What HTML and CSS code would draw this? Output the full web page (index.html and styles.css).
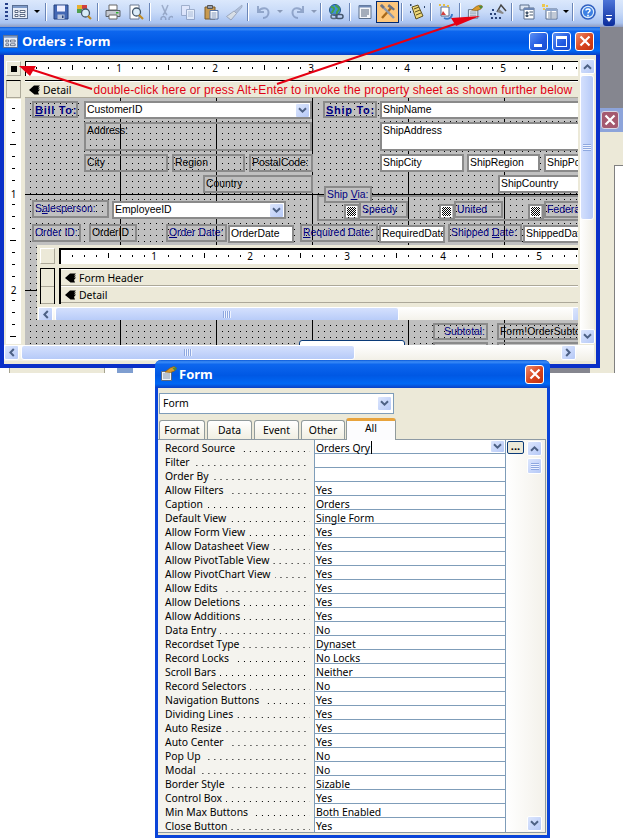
FILE: index.html
```html
<!DOCTYPE html>
<html lang="en">
<head>
<meta charset="utf-8">
<title>Orders : Form</title>
<link rel="stylesheet" href="styles.css">
</head>
<body>
<svg class="defs" width="0" height="0" aria-hidden="true">
  <symbol id="cd" viewBox="0 0 9 7"><path d="M1 1.2 4.5 4.6 8 1.2" fill="none" stroke="#4d6185" stroke-width="2"/></symbol>
  <symbol id="cu" viewBox="0 0 9 7"><path d="M1 5.8 4.5 2.4 8 5.8" fill="none" stroke="#4d6185" stroke-width="2"/></symbol>
  <symbol id="cl" viewBox="0 0 7 9"><path d="M5.8 1 2.4 4.5 5.8 8" fill="none" stroke="#4d6185" stroke-width="2"/></symbol>
  <symbol id="cr" viewBox="0 0 7 9"><path d="M1.2 1 4.6 4.5 1.2 8" fill="none" stroke="#4d6185" stroke-width="2"/></symbol>
  <symbol id="formi" viewBox="0 0 16 14"><rect x=".5" y=".5" width="15" height="13" fill="#e8eef8" stroke="#5a6f92"/><rect x="1" y="1" width="14" height="2" fill="#7d9ac8"/><path d="M3 5.5h3v2H3zM8 5.5h5v2H8zM3 9.5h3v2H3zM8 9.5h5v2H8z" fill="#fff" stroke="#3a4a68" stroke-width=".8"/></symbol>
  <symbol id="props" viewBox="0 0 17 16"><path d="M1.5 5.5h10v9h-10z" fill="#eef2f6" stroke="#59697f"/><path d="M3 8h7M3 10h7M3 12h7" stroke="#8295ad"/><path d="M5 6 10 2l4-1.500 2.500 1.500-2 3-4 1.500z" fill="#d99a2b" stroke="#8a5a10" stroke-width=".7"/><path d="M12.500 2 16 1l.5 2.500-2 1z" fill="#4c8a3a"/></symbol>
  <symbol id="sect" viewBox="0 0 11 10"><path d="M0 5 5 .5h6L9 2.500h2L9 4.500h2L9 7l1 2.500H5.500z" fill="#000"/></symbol>
</svg>

<header class="toolbar">
  <i class="tgrip"></i>
  <span class="b"><svg class="i16" viewBox="0 0 16 14"><use href="#formi"/></svg></span><span class="a"></span><i class="s"></i>
  <span class="b"><svg class="i16" viewBox="0 0 16 16"><path d="M1 1h14v14H1z" fill="#4468b4" stroke="#24407c"/><path d="M4 1.500h8v6H4z" fill="#eef"/><path d="M4.500 10.500h7v4.500h-7z" fill="#b8c4dc"/><path d="M9 11.500h1.500v2.500H9z" fill="#24407c"/></svg></span>
  <span class="b"><svg class="i16" viewBox="0 0 16 16"><path d="M1 1h5v4H1z" fill="#e8b030"/><path d="M6 1h5v4H6z" fill="#d04040"/><path d="M1 5h5v4H1z" fill="#50a050"/><path d="M6 5h5v4H6z" fill="#fff" stroke="#888" stroke-width=".5"/><circle cx="9.500" cy="9" r="4" fill="#d8ecf8" stroke="#44586c" stroke-width="1.300"/><path d="m12 12 3 3" stroke="#c08a20" stroke-width="2.200"/></svg></span><i class="s"></i>
  <span class="b"><svg class="i16" viewBox="0 0 16 16"><path d="M4 1h8v5H4z" fill="#fff" stroke="#666"/><path d="M1 6.500h14v6H1z" fill="#c4c8d0" stroke="#5a6068"/><path d="M11 8h2.500v1.500H11z" fill="#30b030"/><path d="M4 11h8v4H4z" fill="#fff" stroke="#666"/></svg></span>
  <span class="b"><svg class="i16" viewBox="0 0 16 16"><path d="M2 1h9v14H2z" fill="#fff" stroke="#6a7890"/><circle cx="8.500" cy="8" r="4" fill="#dcecf8" stroke="#44586c" stroke-width="1.300"/><path d="m11 11 4 4" stroke="#c08a20" stroke-width="2.200"/></svg></span><i class="s"></i>
  <span class="b"><svg class="i16" viewBox="0 0 16 16" opacity=".55"><path d="M5 1 8 8l3-7M4 15a2.400 2.400 0 1 0 0-.1M12 15a2.400 2.400 0 1 0 0-.1M6 11 8 8l2 3" fill="none" stroke="#7484a4" stroke-width="1.500"/></svg></span>
  <span class="b"><svg class="i16" viewBox="0 0 16 16" opacity=".55"><path d="M1.500 1.500h8v10h-8z" fill="#eef" stroke="#7888a8"/><path d="M6.500 5.500h8v10h-8z" fill="#fff" stroke="#7888a8"/><path d="M8 8h5M8 10h5M8 12h5" stroke="#9aa8c0"/></svg></span>
  <span class="b"><svg class="i16" viewBox="0 0 16 16"><path d="M2 3h10v12H2z" fill="#c89a50" stroke="#7a5a28"/><path d="M4.500 1.500h5v3h-5z" fill="#98a0b0" stroke="#555"/><path d="M7 6.500h8v8.500H7z" fill="#fff" stroke="#5470a0"/><path d="M8.500 9h5M8.500 11h5M8.500 13h5" stroke="#7890b8"/></svg></span>
  <span class="b"><svg class="i16 wide" viewBox="0 0 18 16" opacity=".65"><path d="M17 1 9 7.500l2 2.500 6-7z" fill="#a4b0c8" stroke="#7888a0" stroke-width=".7"/><path d="M9 7 1.500 12.500 6 16l5.500-6.500z" fill="#e4e4de" stroke="#8a90a0"/></svg></span><i class="s"></i>
  <span class="b"><svg class="i16" viewBox="0 0 16 16" opacity=".6"><path d="M3 2v6h6M3.500 7.500C6 3 14 3 13.500 9c-.2 3-2.500 5-5.500 5" fill="none" stroke="#6d83ad" stroke-width="2"/></svg></span><span class="a off"></span>
  <span class="b"><svg class="i16" viewBox="0 0 16 16" opacity=".6"><path d="M13 2v6H7M12.500 7.500C10 3 2 3 2.500 9c.2 3 2.500 5 5.500 5" fill="none" stroke="#6d83ad" stroke-width="2"/></svg></span><span class="a off tight"></span><i class="s"></i>
  <span class="b"><svg class="i16 wide" viewBox="0 0 18 16"><circle cx="8" cy="6" r="5.500" fill="#3f8fd8" stroke="#24588c"/><path d="M4 3c2 0 3 1 3 2S5 7 5 9M9 1c0 2 3 2 3 4s-3 2-2 5" fill="none" stroke="#48a048" stroke-width="2"/><rect x="4" y="10.500" width="6" height="4" rx="2" fill="none" stroke="#5a6c80" stroke-width="1.500"/><rect x="9" y="10.500" width="7" height="4" rx="2" fill="none" stroke="#44566c" stroke-width="1.500"/></svg></span><i class="s"></i>
  <span class="b"><svg class="i16" viewBox="0 0 16 16"><path d="M2 1.500h12v13H2z" fill="#f4f6fa" stroke="#5a6f8c"/><path d="M2 1.500h12v2H2z" fill="#6e88b4"/><path d="M4 6h8M4 8h8M4 10h8M4 12h6" stroke="#54647c"/></svg></span>
  <span class="b on"><svg class="i16 wide" viewBox="0 0 18 18"><path d="M3 15 13 4" stroke="#a86818" stroke-width="2.400"/><path d="m10 1 6 5-1.500 1.500-6-4z" fill="#6c7484"/><path d="M15 15 5 5" stroke="#8c98ac" stroke-width="2.400"/><path d="M1.500 2 3 1l3 3-2 2-3-3z" fill="#6c7484"/></svg></span><i class="s"></i>
  <span class="b"><svg class="i16" viewBox="0 0 16 16"><path d="M3 3 9 1l5 11-7 3z" fill="#f0d878" stroke="#5a5020"/><path d="M5 5l5-2M6 8l5-2M7 11l5-2" stroke="#5a5020"/><path d="M1 1h1.500M15 3h1M1 8h1" stroke="#304870" stroke-width="2"/></svg></span><i class="s"></i>
  <span class="b"><svg class="i16" viewBox="0 0 16 16"><path d="M3 3h8v9H3z" fill="#fff" stroke="#5a6f8c"/><path d="M1 0h2v2H1zM5 0h2v2H5zM9 1h2v2H9z" fill="#e8c040"/><path d="M5 7 3 11h5z" fill="#d04040"/><path d="M6 14c4 2 8 0 8-4" fill="none" stroke="#3878c8" stroke-width="1.800"/></svg></span><i class="s"></i>
  <span class="b"><svg class="i16" viewBox="0 0 17 16"><use href="#props"/></svg></span>
  <span class="b"><svg class="i16 wide" viewBox="0 0 18 16"><path d="M8 8 12 1l5 6" fill="none" stroke="#444" stroke-width="1.500"/><path d="M8 8l2-3 5 4-1.500 1z" fill="#888"/><path d="M3 5h2v2H3zM1 9h2v2H1zM5 9h2v2H5zM2 13h2v2H2zM6 13h2v2H6zM10 13h2v2h-2z" fill="#2c4478"/></svg></span><i class="s"></i>
  <span class="b"><svg class="i16" viewBox="0 0 16 16"><path d="M1 1h9v5H1z" fill="#dde6f4" stroke="#5a6f8c"/><path d="M5 4h10v11H5z" fill="#fff" stroke="#5a6f8c"/><path d="M5 4h10v2H5z" fill="#6e88b4"/><path d="M7 8h2v1.500H7zM7 11h2v1.500H7zM10.500 8H14M10.500 11H14" stroke="#44566c" fill="#44566c"/></svg></span>
  <span class="b"><svg class="i16" viewBox="0 0 16 16"><path d="M4 5h11v10H4z" fill="#fff" stroke="#5a6f8c"/><path d="M4 5h11v2H4z" fill="#8ea6cc"/><path d="M6 9h8M6 11h8M6 13h8M9 7v8" stroke="#8495ad"/><path d="M0 0h3v3H0zM4 1h2v2H4zM1 4h2v2H1z" fill="#ecc850"/></svg></span><span class="a tight"></span><i class="s"></i>
  <span class="b"><svg class="i16" viewBox="0 0 16 16"><circle cx="8" cy="8" r="7" fill="#dcecfc" stroke="#3060c0" stroke-width="1.600"/><circle cx="8" cy="8" r="5" fill="#3c80e4"/><path d="M6 6.500C6 4.500 10 4.500 10 6.500 10 8 8 8 8 9.500" fill="none" stroke="#fff" stroke-width="1.500"/><path d="M7.200 10.800h1.600v1.600H7.200z" fill="#fff"/></svg></span>
  <span class="tend"><i class="tend-a"></i><i class="tend-b"></i></span>
</header>

<div class="desk"></div>

<section class="backwin">
  <div class="backtitle"><span class="x x-dim"><svg viewBox="0 0 12 12"><path d="M1.500 1.500 10.500 10.500M10.500 1.500 1.500 10.500" stroke="#fff" stroke-width="2.200"/></svg></span></div>
  <div class="backbody"><div class="backbox"></div></div>
</section>

<div class="under"><i class="under-a"></i><i class="under-b"></i></div>

<section class="win orders">
  <div class="title">
    <svg class="ticon" viewBox="0 0 16 14"><use href="#formi"/></svg>
    <span class="ttext">Orders : Form</span>
    <span class="wbtns">
      <span class="x x-b"><i class="min"></i></span>
      <span class="x x-b"><i class="max"></i></span>
      <span class="x"><svg viewBox="0 0 12 12"><path d="M1.500 1.500 10.500 10.500M10.500 1.500 1.500 10.500" stroke="#fff" stroke-width="2.200"/></svg></span>
    </span>
  </div>
  <div class="obody">
    <div class="corner"><i class="square"></i></div>
    <div class="ruler rh"><b class="n n1">1</b><b class="n n2">2</b><b class="n n3">3</b><b class="n n4">4</b><b class="n n5">5</b></div>
    <div class="vscroll">
      <span class="sb"><svg class="ch" viewBox="0 0 9 7"><use href="#cu"/></svg></span>
      <div class="vtrack"><div class="vthumb"><i class="grip-v"></i></div></div>
      <span class="sb"><svg class="ch" viewBox="0 0 9 7"><use href="#cd"/></svg></span>
    </div>
    <div class="leftcol">
      <div class="secbox"></div>
      <div class="ruler rv"><b class="vn vn1">1</b><b class="vn vn2">2</b></div>
    </div>
    <div class="design">
      <div class="bar detailbar"><svg class="sect" viewBox="0 0 11 10"><use href="#sect"/></svg><span>Detail</span><span class="redtext">double-click here or press Alt+Enter to invoke the property sheet as shown further below</span></div>
      <div class="canvas">
        <div class="c lbl strong billto"><u>B</u>ill To:</div>
        <div class="c fld customer">CustomerID<span class="sb combo"><svg class="ch" viewBox="0 0 9 7"><use href="#cd"/></svg></span></div>
        <div class="c lbl strong shipto"><u>S</u>hip To:</div>
        <div class="c fld shipname">ShipName</div>
        <div class="c ctl address">Address:</div>
        <div class="c fld shipaddr">ShipAddress</div>
        <div class="c ctl city">City</div>
        <div class="c ctl region">Region</div>
        <div class="c ctl postal">PostalCode:</div>
        <div class="c fld shipcity">ShipCity</div>
        <div class="c fld shipregion">ShipRegion</div>
        <div class="c fld shippo">ShipPostalCode</div>
        <div class="c ctl country">Country</div>
        <div class="c fld shipcountry">ShipCountry</div>
        <div class="c frame"></div>
        <div class="c lbl shipvia">Ship <u>V</u>ia:</div>
        <div class="c cbx cb1"><i></i></div><div class="c lbl speedy">Speedy</div>
        <div class="c cbx cb2"><i></i></div><div class="c lbl united">United</div>
        <div class="c cbx cb3"><i></i></div><div class="c lbl federal">Federal</div>
        <div class="c lbl sales">S<u>a</u>lesperson:</div>
        <div class="c fld employee">EmployeeID<span class="sb combo"><svg class="ch" viewBox="0 0 9 7"><use href="#cd"/></svg></span></div>
        <div class="c lbl oidl">Order ID:</div>
        <div class="c ctl oid">OrderID</div>
        <div class="c lbl odl"><u>O</u>rder Date:</div>
        <div class="c fld od">OrderDate</div>
        <div class="c lbl rdl"><u>R</u>equired Date:</div>
        <div class="c fld rd">RequiredDate</div>
        <div class="c lbl sdl">Shipped <u>D</u>ate:</div>
        <div class="c fld sd">ShippedDate</div>

        <div class="c lbl subtotal">Subtotal:</div>
        <div class="c ctl subval">Form!OrderSubtotal</div>
        <div class="c peek"></div>
        <div class="c ctl sub2"></div>
        <div class="c ctl sub3"></div>

        <div class="c subform">
          <div class="corner sc"></div>
          <div class="ruler srh"><b class="n s1">1</b><b class="n s2">2</b><b class="n s3">3</b><b class="n s4">4</b><b class="n s5">5</b></div>
          <div class="sboxes"><i></i><i></i></div>
          <div class="sbars">
            <div class="bar sbar"><svg class="sect" viewBox="0 0 11 10"><use href="#sect"/></svg><span>Form Header</span></div>
            <div class="bar sbar"><svg class="sect" viewBox="0 0 11 10"><use href="#sect"/></svg><span>Detail</span></div>
          </div>
          <div class="hscroll inner">
            <span class="sb"><svg class="ch tall" viewBox="0 0 7 9"><use href="#cl"/></svg></span>
            <div class="hthumb hs"><i class="grip-h"></i></div>
            <span class="sb endbtn"></span>
          </div>
        </div>
      </div>
    </div>
    <div class="hscroll outer">
      <span class="sb"><svg class="ch tall" viewBox="0 0 7 9"><use href="#cl"/></svg></span>
      <div class="hthumb ho"><i class="grip-h"></i></div>
      <span class="sb endbtn"><svg class="ch tall" viewBox="0 0 7 9"><use href="#cr"/></svg></span>
    </div>
  </div>
</section>

<section class="win form">
  <div class="title">
    <svg class="ticon picon" viewBox="0 0 17 16"><use href="#props"/></svg>
    <span class="ttext">Form</span>
    <span class="wbtns"><span class="x"><svg viewBox="0 0 12 12"><path d="M1.500 1.500 10.500 10.500M10.500 1.500 1.500 10.500" stroke="#fff" stroke-width="2.200"/></svg></span></span>
  </div>
  <div class="fbody">
    <div class="fcombo">Form<span class="sb fcbtn"><svg class="ch" viewBox="0 0 9 7"><use href="#cd"/></svg></span></div>
    <div class="tabs">
      <span class="tab t1">Format</span><span class="tab t2">Data</span><span class="tab t2">Event</span><span class="tab t3">Other</span><span class="tab active">All</span>
    </div>
    <div class="panel">
      <div class="plist">
        <div class="row"><div class="k"><span>Record Source</span><i class="d"></i></div><div class="v first">Orders Qry<i class="caret"></i><span class="sb vbtn"><svg class="ch" viewBox="0 0 9 7"><use href="#cd"/></svg></span></div></div>
        <div class="row"><div class="k"><span>Filter</span><i class="d"></i></div><div class="v"></div></div>
        <div class="row"><div class="k"><span>Order By</span><i class="d"></i></div><div class="v"></div></div>
        <div class="row"><div class="k"><span>Allow Filters</span><i class="d"></i></div><div class="v">Yes</div></div>
        <div class="row"><div class="k"><span>Caption</span><i class="d"></i></div><div class="v">Orders</div></div>
        <div class="row"><div class="k"><span>Default View</span><i class="d"></i></div><div class="v">Single Form</div></div>
        <div class="row"><div class="k"><span>Allow Form View</span><i class="d"></i></div><div class="v">Yes</div></div>
        <div class="row"><div class="k"><span>Allow Datasheet View</span><i class="d"></i></div><div class="v">Yes</div></div>
        <div class="row"><div class="k"><span>Allow PivotTable View</span><i class="d"></i></div><div class="v">Yes</div></div>
        <div class="row"><div class="k"><span>Allow PivotChart View</span><i class="d"></i></div><div class="v">Yes</div></div>
        <div class="row"><div class="k"><span>Allow Edits</span><i class="d"></i></div><div class="v">Yes</div></div>
        <div class="row"><div class="k"><span>Allow Deletions</span><i class="d"></i></div><div class="v">Yes</div></div>
        <div class="row"><div class="k"><span>Allow Additions</span><i class="d"></i></div><div class="v">Yes</div></div>
        <div class="row"><div class="k"><span>Data Entry</span><i class="d"></i></div><div class="v">No</div></div>
        <div class="row"><div class="k"><span>Recordset Type</span><i class="d"></i></div><div class="v">Dynaset</div></div>
        <div class="row"><div class="k"><span>Record Locks</span><i class="d"></i></div><div class="v">No Locks</div></div>
        <div class="row"><div class="k"><span>Scroll Bars</span><i class="d"></i></div><div class="v">Neither</div></div>
        <div class="row"><div class="k"><span>Record Selectors</span><i class="d"></i></div><div class="v">No</div></div>
        <div class="row"><div class="k"><span>Navigation Buttons</span><i class="d"></i></div><div class="v">Yes</div></div>
        <div class="row"><div class="k"><span>Dividing Lines</span><i class="d"></i></div><div class="v">Yes</div></div>
        <div class="row"><div class="k"><span>Auto Resize</span><i class="d"></i></div><div class="v">Yes</div></div>
        <div class="row"><div class="k"><span>Auto Center</span><i class="d"></i></div><div class="v">Yes</div></div>
        <div class="row"><div class="k"><span>Pop Up</span><i class="d"></i></div><div class="v">No</div></div>
        <div class="row"><div class="k"><span>Modal</span><i class="d"></i></div><div class="v">No</div></div>
        <div class="row"><div class="k"><span>Border Style</span><i class="d"></i></div><div class="v">Sizable</div></div>
        <div class="row"><div class="k"><span>Control Box</span><i class="d"></i></div><div class="v">Yes</div></div>
        <div class="row"><div class="k"><span>Min Max Buttons</span><i class="d"></i></div><div class="v">Both Enabled</div></div>
        <div class="row"><div class="k"><span>Close Button</span><i class="d"></i></div><div class="v">Yes</div></div>
      </div>
      <div class="pside">
        <span class="dots3">...</span>
        <div class="pscroll">
          <span class="sb psb"><svg class="ch" viewBox="0 0 9 7"><use href="#cu"/></svg></span>
          <span class="sb pthumb"><i class="grip-v"></i></span>
          <span class="sb psb pdown"><svg class="ch" viewBox="0 0 9 7"><use href="#cd"/></svg></span>
        </div>
      </div>
    </div>
  </div>
</section>

<svg class="arrows" viewBox="0 0 623 110" aria-hidden="true">
  <path d="M92 89 30 69" stroke="#e60012" stroke-width="2" fill="none"/>
  <path d="M19 66 36 66 30 76z" fill="#e60012"/>
  <path d="M277 84 455 24" stroke="#e60012" stroke-width="2" fill="none"/>
  <path d="M480 16 451 18 456 26z" fill="#e60012"/>
</svg>
</body>
</html>
```
FILE: styles.css
```css
* { box-sizing: border-box; }
html, body { margin: 0; padding: 0; }
body {
  position: relative;
  width: 623px;
  height: 840px;
  overflow: hidden;
  background: #fff;
  font: 10.4px/14px "Noto Sans", "Liberation Sans", sans-serif;
  color: #000;
}
i { display: block; font-style: normal; }
b { font-weight: 400; }
.defs { position: absolute; }

/* toolbar */
.toolbar {
  display: flex;
  align-items: center;
  width: 623px;
  height: 27px;
  padding: 0 0 4px 5px;
  background: linear-gradient(#dbe8fc 0, #c8daf8 45%, #a9c3f0 85%, #8f9cc0 100%);
}
.tgrip { width: 3px; height: 17px; background: repeating-linear-gradient(#27418a 0 2px, transparent 2px 4px); }
.b { display: flex; width: 23px; height: 22px; align-items: center; justify-content: center; flex: none; }
.b.on { background: #fdc77c; border: 1px solid #00286e; }
.a { width: 12px; height: 22px; flex: none; display: flex; align-items: center; justify-content: center; }
.a::after { content: ""; border: 3px solid transparent; border-top: 3px solid #000; border-bottom: 0; }
.a.off::after { border-top-color: #8a9ab8; }
.a.tight { width: 9px; }
.s { width: 6px; height: 18px; flex: none; background: linear-gradient(90deg, transparent 2px, #6a86b8 2px, #6a86b8 3px, #fff 3px, #fff 4px, transparent 4px); }
.i16 { width: 16px; height: 16px; display: block; }
.i16.wide { width: 18px; height: 18px; }
.tend { position: absolute; right: 8px; top: 0; width: 12px; height: 26px; background: linear-gradient(#4c74d8, #0a2c9c); border-radius: 0 0 3px 3px; }
.tend-a { position: absolute; left: 3px; top: 15px; width: 6px; height: 1px; background: #fff; }
.tend-b { position: absolute; left: 3px; top: 18px; border: 3px solid transparent; border-top: 4px solid #fff; border-bottom: 0; }

/* background window */
.desk { position: absolute; left: 0; top: 27px; width: 623px; height: 346px; background: #85868f; }
.backwin { position: absolute; left: 590px; top: 108px; width: 40px; height: 265px; }
.backtitle { height: 24px; background: #8da4da; border-radius: 5px 0 0 0; padding: 3px 0 0 11px; }
.backbody { height: 241px; background: #ece9d8; padding: 33px 0 0 24px; }
.backbox { height: 208px; background: #fff; border: 1px solid #808080; border-right: 0; border-bottom: 0; }
.under { position: absolute; left: 0; top: 368px; width: 155px; height: 5px; background: #fff; display: flex; padding-left: 9px; gap: 12px; }
.under-a { width: 96px; background: #ece9d8; border: 1px solid #a6a390; border-width: 0 1px; }
.under-b { width: 16px; background: #7f9ed0; }

/* windows */
.win { position: absolute; display: flex; flex-direction: column; background: #ece9d8; border: solid #0a3fd0; }
.orders { left: 0; top: 27px; width: 600px; height: 341px; border-width: 0 4px 4px 4px; border-color: #0a30c8; }
.form { left: 155px; top: 360px; width: 395px; height: 478px; border-width: 0 3px 3px 3px; border-radius: 6px 6px 0 0; border-color: #0a44d8; }
.title {
  display: flex;
  align-items: center;
  flex: none;
  height: 28px;
  margin: 0 -4px;
  padding: 0 6px 0 3px;
  background: linear-gradient(#0a58d8 0, #3c8cf6 7%, #0d66ee 16%, #0058e4 55%, #0068f4 85%, #0a40c4 100%);
  color: #fff;
}
.form .title { margin: 0 -3px; border-radius: 6px 6px 0 0; padding: 0 6px 0 5px; }
.ticon { width: 15px; height: 13px; flex: none; margin-right: 4px; }
.picon { width: 17px; height: 16px; margin-right: 2px; }
.ttext { font: 700 13px/16px "Noto Sans", sans-serif; }
.wbtns { margin-left: auto; display: flex; gap: 4px; }
.x {
  display: flex;
  align-items: center;
  justify-content: center;
  width: 19px;
  height: 19px;
  border: 1px solid #fff;
  border-radius: 3px;
  background: linear-gradient(135deg, #ec8a6c, #d8441c 55%, #c03010);
}
.x svg { width: 12px; height: 12px; display: block; }
.x-b { background: linear-gradient(135deg, #5c90f4, #2058e0 60%, #1a4cd0); }
.x-dim { width: 18px; height: 18px; background: #a4596f; border-color: #d8d8e4; }
.min { width: 8px; height: 3px; background: #fff; margin-top: 8px; margin-right: 2px; }
.max { width: 11px; height: 11px; border: 1px solid #fff; border-top-width: 3px; }

/* orders body */
.obody {
  flex: 1;
  display: grid;
  grid-template-columns: 15px 555px 14px;
  grid-template-rows: 15px 264px 16px;
  column-gap: 2px;
  row-gap: 4px;
  padding: 6px 0 0 2px;
  background: #ece9d8;
  grid-template-areas: "cn rh vs" "lc ds vs" "hs hs hs";
}
.corner { grid-area: cn; background: #ece9d8; border: 1px solid #fff; border-color: #fff #aca899 #aca899 #fff; display: flex; align-items: center; justify-content: center; }
.square { width: 6px; height: 6px; background: #000; }
.ruler { position: relative; background-color: #fff; }
.rh, .srh {
  background-image: linear-gradient(90deg, #000 1px, transparent 1px), linear-gradient(90deg, #000 1px, transparent 1px);
  background-repeat: repeat-x;
  background-size: 12px 2px, 48px 5px;
  background-clip: padding-box;
  background-origin: padding-box;
}
.rh {
  grid-area: rh;
  margin-left: 2px;
  border-top: 1px solid #000;
  border-left: 1px solid #000;
  background-position: 10px 5px, 46px 3px;
}
.n { position: absolute; top: 0; width: 10px; height: 14px; line-height: 13px; text-align: center; background: #fff; font-size: 10px; }
.rh .n1 { left: 88px; } .rh .n2 { left: 184px; } .rh .n3 { left: 280px; } .rh .n4 { left: 376px; } .rh .n5 { left: 472px; }

.leftcol { grid-area: lc; display: flex; flex-direction: column; gap: 1px; }
.secbox { height: 18px; background: #ece9d8; border: 1px solid #aca899; border-top-color: #000; flex: none; }
.rv {
  flex: 1;
  background-image: linear-gradient(#000 1px, transparent 1px), linear-gradient(#000 1px, transparent 1px);
  background-repeat: repeat-y;
  background-size: 3px 12px, 6px 48px;
  background-position: 6px 9px, 4px 45px;
}
.vn { position: absolute; left: 0; width: 100%; height: 13px; line-height: 13px; text-align: center; background: #fff; font-size: 10px; }
.vn1 { top: 89px; } .vn2 { top: 185px; }

.design { grid-area: ds; margin-left: 2px; display: flex; flex-direction: column; border-top: 1px solid #000; height: 265px; overflow: hidden; }
.bar {
  display: flex;
  align-items: center;
  background: #ece9d8;
  border-top: 1px solid #fff;
  border-bottom: 1px solid #aca899;
  white-space: nowrap;
}
.detailbar { height: 17px; padding-left: 4px; flex: none; }
.sect { width: 11px; height: 10px; margin-right: 3px; flex: none; }
.redtext { margin-left: 22px; color: #e00012; font: 12px/14px "Liberation Sans", sans-serif; letter-spacing: .125px; }

.canvas {
  position: relative;
  flex: 1;
  overflow: hidden;
  background-color: #c0c0c0;
  background-image:
    linear-gradient(#000, #000),
    linear-gradient(#000, #000),
    linear-gradient(90deg, #000 1px, transparent 1px),
    conic-gradient(at 1px 1px, transparent 75%, #000 0);
  background-repeat: no-repeat, no-repeat, repeat-x, repeat;
  background-size: 100% 1px, 100% 1px, 96px 100%, 6px 6px;
  background-position: 0 96px, 0 192px, 95px 0, 5px 5px;
}

/* controls on the design surface */
.c { position: absolute; white-space: nowrap; overflow: hidden; }
.ctl, .lbl, .fld { border: 2px solid #8a8a8a; padding: 0 1px; height: 18px; line-height: 14px; font-family: "Liberation Sans", sans-serif; font-size: 10.4px; }
.ctl { color: #000; }
.lbl { color: #000080; }
.strong { font-weight: 700; font-size: 11px; letter-spacing: .7px; }
.fld { background: #fff; }
.combo { position: absolute; right: 0; top: 0; width: 15px; height: 14px; }
.billto { left: 7px; top: 3px; width: 46px; height: 17px; }
.customer { left: 59px; top: 3px; width: 228px; }
.shipto { left: 298px; top: 3px; width: 54px; height: 17px; }
.shipname { left: 355px; top: 3px; width: 200px; }
.address { left: 59px; top: 24px; width: 228px; height: 29px; }
.shipaddr { left: 355px; top: 24px; width: 200px; height: 29px; }
.city { left: 59px; top: 56px; width: 84px; }
.region { left: 147px; top: 56px; width: 73px; }
.postal { left: 224px; top: 56px; width: 64px; }
.shipcity { left: 355px; top: 56px; width: 84px; }
.shipregion { left: 442px; top: 56px; width: 73px; }
.shippo { left: 519px; top: 56px; width: 64px; }
.country { left: 178px; top: 77px; width: 110px; }
.shipcountry { left: 473px; top: 77px; width: 90px; }
.frame { left: 292px; top: 97px; width: 280px; height: 26px; border: 2px solid #8a8a8a; }
.shipvia { left: 299px; top: 88px; width: 48px; height: 17px; background: #c0c0c0; }
.cbx { width: 16px; height: 16px; border: 2px solid #8a8a8a; }
.cbx i { width: 9px; height: 9px; margin: 1px 0 0 1px; background: conic-gradient(#000 25%, #fff 0 50%, #000 0 75%, #fff 0) 0 0 / 2px 2px; outline: 1px solid #fff; }
.cb1 { left: 319px; top: 106px; } .cb2 { left: 414px; top: 106px; } .cb3 { left: 503px; top: 106px; }
.speedy { left: 334px; top: 103px; width: 49px; height: 17px; }
.united { left: 429px; top: 103px; width: 49px; height: 17px; }
.federal { left: 519px; top: 103px; width: 49px; height: 17px; }
.sales { left: 7px; top: 102px; width: 77px; }
.employee { left: 87px; top: 103px; width: 174px; }
.oidl { left: 7px; top: 126px; width: 49px; }
.oid { left: 64px; top: 126px; width: 48px; }
.odl { left: 141px; top: 126px; width: 61px; }
.od { left: 203px; top: 127px; width: 66px; }
.rdl { left: 275px; top: 126px; width: 78px; }
.rd { left: 354px; top: 127px; width: 66px; }
.sdl { left: 423px; top: 126px; width: 74px; }
.sd { left: 498px; top: 127px; width: 70px; }
.subtotal { left: 408px; top: 225px; width: 55px; height: 17px; text-align: right; }
.subval { left: 472px; top: 225px; width: 90px; height: 17px; }
.sub2 { left: 408px; top: 244px; width: 55px; }
.sub3 { left: 472px; top: 244px; width: 90px; }
.peek { left: 274px; top: 242px; width: 106px; height: 8px; background: #fff; border: 1px solid #0a3a78; border-radius: 3px 3px 0 0; }

/* nested design view */
.subform {
  left: 12px;
  top: 147px;
  width: 550px;
  height: 75px;
  background: #ece9d8;
  display: grid;
  grid-template-columns: 15px 1fr;
  grid-template-rows: 16px 36px 15px;
  column-gap: 4px;
  row-gap: 4px;
  padding: 3px 0 0 3px;
}
.sc { grid-area: auto; }
.srh {
  border-top: 2px solid #000;
  border-left: 2px solid #000;
  background-position: 11px 5px, 47px 3px;
}
.srh .s1 { left: 88px; } .srh .s2 { left: 184px; } .srh .s3 { left: 281px; } .srh .s4 { left: 377px; } .srh .s5 { left: 473px; }
.sboxes { display: flex; flex-direction: column; border: 1px solid #000; border-bottom: 0; height: 36px; }
.sboxes i { flex: 1; background: #ece9d8; border-bottom: 1px solid #aca899; }
.sbars { display: flex; flex-direction: column; border-top: 1px solid #000; border-left: 2px solid #000; height: 36px; }
.sbar { height: 17px; padding-left: 4px; flex: none; }
.hscroll { display: flex; background: linear-gradient(#fff, #f1efe6); }
.inner { grid-column: 1 / 3; height: 16px; margin: -1px 0 0 -2px; }
.outer { grid-area: hs; height: 16px; margin: -3px 0 0 -2px; padding-right: 18px; }
.sb {
  display: flex;
  align-items: center;
  justify-content: center;
  flex: none;
  width: 15px;
  height: 15px;
  background: linear-gradient(135deg, #dce6fd, #b6c9f7);
  border: 1px solid #fff;
  border-radius: 2px;
}
.ch { width: 9px; height: 7px; display: block; }
.ch.tall { width: 7px; height: 9px; }
.hthumb { display: flex; align-items: center; justify-content: center; height: 15px; margin-left: 2px; border: 1px solid #fff; border-radius: 3px; background: linear-gradient(#d4e0fd, #b6caf8); }
.hs { width: 344px; }
.ho { width: 334px; }
.endbtn { margin-left: auto; }
.grip-h { width: 8px; height: 7px; background: repeating-linear-gradient(90deg, #8ea8e0 0 1px, #eef3ff 1px 2px); }
.grip-v { width: 8px; height: 7px; background: repeating-linear-gradient(#8ea8e0 0 1px, #eef3ff 1px 2px); }

.vscroll { grid-area: vs; display: flex; flex-direction: column; height: 285px; margin-top: -2px; background: linear-gradient(90deg, #fff, #f1efe6); }
.vscroll .sb { height: 15px; }
.vtrack { flex: 1; padding-top: 1px; }
.vthumb { display: flex; align-items: center; justify-content: center; height: 145px; border: 1px solid #fff; border-radius: 3px; background: linear-gradient(90deg, #d4e0fd, #b6caf8); }

/* property sheet */
.fbody { flex: 1; display: flex; flex-direction: column; padding-top: 5px; }
.fcombo { position: relative; margin-left: 1px; width: 235px; height: 21px; background: #fff; border: 1px solid #7f9db9; padding: 2px 3px; flex: none; }
.fcbtn { position: absolute; right: 1px; top: 2px; width: 15px; height: 15px; }
.tabs { display: flex; gap: 2px; margin: 4px 0 0 1px; height: 21px; align-items: flex-end; flex: none; position: relative; z-index: 1; }
.tab { height: 19px; border: 1px solid #919b9c; border-bottom: 0; border-radius: 3px 3px 0 0; background: linear-gradient(#fff, #f1efe2); text-align: center; line-height: 19px; flex: none; }
.t1 { width: 46px; }
.t2 { width: 45px; }
.t3 { width: 44px; }
.active { width: 50px; height: 22px; margin-left: -1px; margin-bottom: -1px; background: #fcfcfe; border-top: 3px solid #e8a33c; line-height: 14px; }
.panel { flex: none; display: flex; width: 388px; height: 394px; margin-bottom: 2px; background: #fff; border: 1px solid #8d9aa4; border-left: 0; overflow: hidden; }
.plist { width: 348px; flex: none; background: linear-gradient(90deg, #f4f3ee 156px, #fff 156px); }
.row { display: grid; grid-template-columns: 156px 192px; height: 14px; }
.k { display: flex; height: 14px; padding: 1px 4px 0 7px; line-height: 15px; white-space: nowrap; }
.d { flex: 1; min-width: 0; height: 12px; margin-left: 4px; background: conic-gradient(at 1px 1px, transparent 75%, #000 0) right bottom / 6px 2px repeat-x; }
.v { position: relative; height: 14px; border: 1px solid #7f9db9; border-width: 0 1px 1px 1px; padding: 1px 0 0 1px; line-height: 14px; white-space: nowrap; }
.row:last-child .v { border-bottom: 0; }
.first { display: flex; }
.caret { width: 1px; height: 13px; background: #000; margin-left: 1px; }
.vbtn { position: absolute; right: 0; top: 0; width: 15px; height: 13px; }
.pside { flex: 1; display: flex; padding-top: 1px; background: linear-gradient(90deg, #fff, #f3f1ea); }
.dots3 { width: 17px; height: 13px; margin-left: 1px; background: #ece9d8; border: 1px solid #0a3a78; border-radius: 2px; text-align: center; font-weight: 700; line-height: 8px; font-size: 11px; flex: none; }
.pscroll { display: flex; flex-direction: column; margin-left: 3px; height: 390px; gap: 2px; }
.psb { width: 15px; height: 15px; }
.pthumb { width: 15px; height: 16px; }
.pdown { margin-top: auto; }

/* annotation arrows */
.arrows { position: absolute; left: 0; top: 0; width: 623px; height: 110px; pointer-events: none; }
```
